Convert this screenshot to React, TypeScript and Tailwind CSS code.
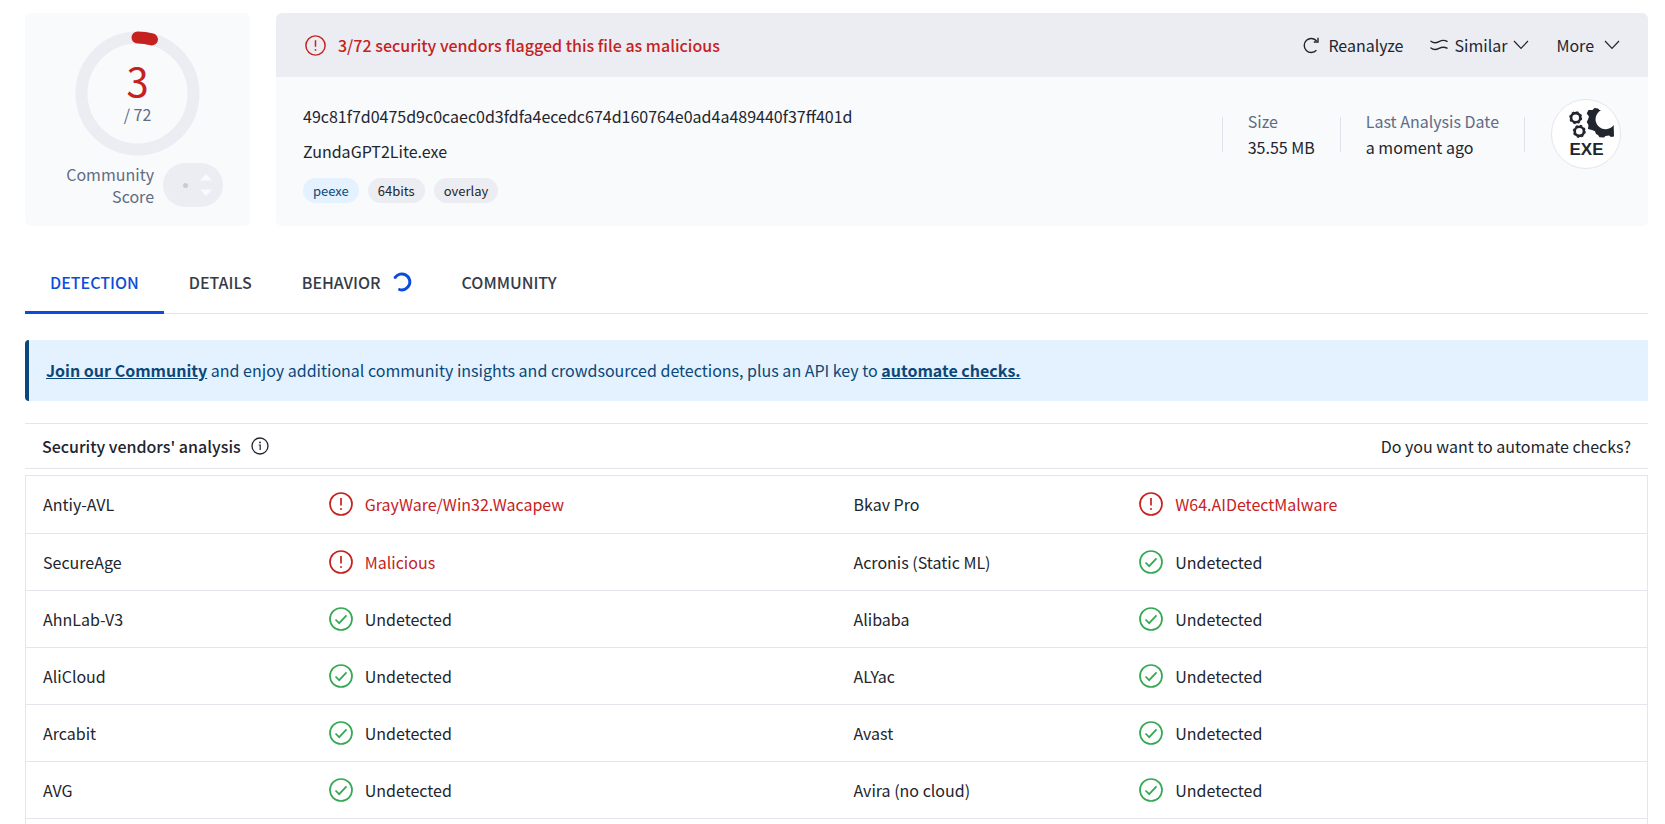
import React, { useState } from 'react';

type Verdict = { vendor: string; result: string; malicious?: boolean };

const FONT = "font-['Noto_Sans_CJK_JP','Noto_Sans',sans-serif]";

const ROWS: [Verdict, Verdict][] = [
    [{ vendor: 'Antiy-AVL', result: 'GrayWare/Win32.Wacapew', malicious: true }, { vendor: 'Bkav Pro', result: 'W64.AIDetectMalware', malicious: true }],
    [{ vendor: 'SecureAge', result: 'Malicious', malicious: true }, { vendor: 'Acronis (Static ML)', result: 'Undetected' }],
    [{ vendor: 'AhnLab-V3', result: 'Undetected' }, { vendor: 'Alibaba', result: 'Undetected' }],
    [{ vendor: 'AliCloud', result: 'Undetected' }, { vendor: 'ALYac', result: 'Undetected' }],
    [{ vendor: 'Arcabit', result: 'Undetected' }, { vendor: 'Avast', result: 'Undetected' }],
    [{ vendor: 'AVG', result: 'Undetected' }, { vendor: 'Avira (no cloud)', result: 'Undetected' }],
];

const TABS = ['Detection', 'Details', 'Behavior', 'Community'];

const AlertIcon = ({ className = '' }: { className?: string }) => (
    <svg viewBox="0 0 24 24" fill="none" stroke="currentColor" className={`shrink-0 ${className}`}>
        <circle cx="12" cy="12" r="11" strokeWidth="1.7" />
        <path d="M12 6v7.500" strokeWidth="1.7" />
        <circle cx="12" cy="17" r="1" fill="currentColor" stroke="none" />
    </svg>
);

const CheckIcon = ({ className = '' }: { className?: string }) => (
    <svg viewBox="0 0 24 24" fill="none" stroke="currentColor" strokeWidth="1.7" className={`shrink-0 ${className}`}>
        <circle cx="12" cy="12" r="11" />
        <path d="M6.500 12.500l3.700 3.700 7.300-7.800" />
    </svg>
);

const InfoIcon = () => (
    <svg viewBox="0 0 18 18" fill="none" stroke="currentColor" className="size-[18px] shrink-0">
        <circle cx="9" cy="9" r="8" strokeWidth="1.3" />
        <path d="M7.800 8h1.400v5" strokeWidth="1.2" />
        <circle cx="9" cy="5.400" r="0.9" fill="currentColor" stroke="none" />
    </svg>
);

const Chevron = () => (
    <svg viewBox="0 0 16 10" fill="none" stroke="currentColor" strokeWidth="1.2" className="h-[10px] w-4 shrink-0">
        <path d="M1 1l7 7.300L15 1" />
    </svg>
);

const Spinner = () => (
    <svg viewBox="0 0 20 20" fill="none" stroke="#0b4dda" strokeWidth="3" strokeLinecap="round" className="size-5 shrink-0">
        <path d="M3.200 5.400A8 8 0 1 1 7.600 17.600" />
    </svg>
);

// One small toothed wheel with an open hub
const Gear = ({ x, y }: { x: number; y: number }) => (
    <g transform={`translate(${x} ${y})`} fill="none" stroke="#21252e">
        <circle r="4.6" strokeWidth="2.6" />
        <circle r="5.9" strokeWidth="1.2" strokeDasharray="2.3 2.33" />
    </g>
);

const ExeBadge = () => (
    <div className="flex size-[70px] shrink-0 items-center justify-center rounded-full border border-[#e3e6ed] bg-white">
        <svg viewBox="0 0 70 70" className="size-[70px] shrink-0">
            <Gear x={24.7} y={18.7} />
            <Gear x={28.3} y={32.3} />
            <path
                fill="#21252e"
                d="M50 11.3A10 10 0 1 0 62.7 26L63 37.500 60 38 58 36.500 54.500 37 53 38.500 48.500 38.300 47 36 45 35 44 32.300 41 31 37 30 37.500 26 35.700 23 37 20.500 38 17.500 35.700 14.500 37.500 11 41.500 11 43.500 9 47 9.500 48.500 11z"
            />
            <text x="35.5" y="56" textAnchor="middle" fill="#21252e" fontSize="17" fontWeight="700" fontFamily="Liberation Sans, Arial, sans-serif">EXE</text>
        </svg>
    </div>
);

const ScoreCard = ({ score, total }: { score: number; total: number }) => {
    const radius = 56;
    const circumference = 2 * Math.PI * radius;
    const arc = (score / total) * circumference;

    return (
        <section className="flex h-[213px] w-[225px] shrink-0 flex-col items-center rounded-md bg-[#f9fafc] pt-[18px]">
            <div className="relative size-[125px] shrink-0">
                <svg viewBox="0 0 125 125" fill="none" strokeWidth="12" className="size-full">
                    <circle cx="62.5" cy="62.5" r={radius} stroke="#ecedf2" />
                    <circle
                        cx="62.5" cy="62.5" r={radius} stroke="#c5221f" strokeLinecap="round"
                        strokeDasharray={`${arc} ${circumference}`} transform="rotate(-90 62.5 62.5)"
                    />
                </svg>
                <div className="absolute inset-0 flex flex-col items-center justify-center gap-1">
                    <span className="text-[40px] leading-[36px] text-[#c5221f]">{score}</span>
                    <span className="leading-6 text-[#606c84]">/ {total}</span>
                </div>
            </div>
            <div className="mt-[7px] flex w-full items-center justify-end gap-[9px] pr-[27px]">
                <span className="w-24 text-right leading-[22px] text-[#606c84]">Community Score</span>
                <div className="flex h-11 w-[60px] items-center justify-between rounded-full bg-[#ecedf2] pr-[10px] pl-5">
                    <span className="size-[5px] rounded-full bg-[#c8cad8]" />
                    <svg viewBox="0 0 14 22" fill="#f9fafc" className="h-[22px] w-[14px]">
                        <path d="M1 6.500L7 0l6 6.500zM1 15.500h12L7 22z" />
                    </svg>
                </div>
            </div>
        </section>
    );
};

const SummaryCard = () => (
    <section className="flex min-w-0 flex-1 flex-col overflow-hidden rounded-md bg-[#f9fafc]">
        <header className="flex h-16 shrink-0 items-center justify-between bg-[#ecedf2] pr-7 pl-[29px]">
            <div className="flex items-center gap-3 font-medium text-[#c5221f]">
                <AlertIcon className="size-[21px]" />
                3/72 security vendors flagged this file as malicious
            </div>
            <div className="flex items-center gap-[27px]">
                <button className="flex items-center gap-2">
                    <svg viewBox="0 0 18 18" fill="none" stroke="currentColor" strokeWidth="1.4" className="size-[18px]">
                        <path d="M14.400 14.200A7 7 0 1 1 14.600 5" />
                        <path d="M16 1.800V6h-4.200" />
                    </svg>
                    Reanalyze
                </button>
                <button className="flex items-center gap-[6px]">
                    <svg viewBox="0 0 18 12" fill="none" stroke="currentColor" strokeWidth="1.4" strokeLinecap="round" className="h-3 w-[18px]">
                        <path d="M1 2.200C3.800 4.600 6 4.200 9 2.600S14 .600 17 2.400M1 9C3.800 11.400 6 11 9 9.400S14 7.400 17 9.200" />
                    </svg>
                    Similar
                    <Chevron />
                </button>
                <button className="flex items-center gap-[10px]">More<Chevron /></button>
            </div>
        </header>
        <div className="flex flex-1 items-start justify-between px-[27px]">
            <div className="min-w-0 pt-[27px]">
                <div className="leading-6">49c81f7d0475d9c0caec0d3fdfa4ecedc674d160764e0ad4a489440f37ff401d</div>
                <div className="mt-[11px] leading-6">ZundaGPT2Lite.exe</div>
                <div className="mt-[15px] flex gap-[9px] text-[13px]">
                    <a href="#peexe" className="rounded-full bg-[#e3f2fe] px-[10px] leading-[25px] text-[#0b4779]">peexe</a>
                    <a href="#64bits" className="rounded-full bg-[#ecedf2] px-[10px] leading-[25px]">64bits</a>
                    <a href="#overlay" className="rounded-full bg-[#ecedf2] px-[10px] leading-[25px]">overlay</a>
                </div>
            </div>
            <div className="flex shrink-0 items-center pt-[22px]">
                <dl className="flex items-center leading-[26px]">
                    <div className="h-[35px] w-px bg-[#dfe3eb]" />
                    <div className="px-[25px]">
                        <dt className="text-[#606c84]">Size</dt>
                        <dd>35.55 MB</dd>
                    </div>
                    <div className="h-[35px] w-px bg-[#dfe3eb]" />
                    <div className="px-[25px]">
                        <dt className="text-[#606c84]">Last Analysis Date</dt>
                        <dd>a moment ago</dd>
                    </div>
                    <div className="mr-[26px] h-[35px] w-px bg-[#dfe3eb]" />
                </dl>
                <ExeBadge />
            </div>
        </div>
    </section>
);

const VerdictCells = ({ vendor, result, malicious }: Verdict) => (
    <>
        <td className="pl-[17px]">{vendor}</td>
        <td className="pl-[11px]">
            <span className={`flex items-center gap-3 ${malicious ? 'text-[#c5221f]' : ''}`}>
                {malicious ? <AlertIcon className="size-6" /> : <CheckIcon className="size-6 text-[#34a853]" />}
                {result}
            </span>
        </td>
    </>
);

const App: React.FC = () => {
    const [active, setActive] = useState('Detection');

    return (
        <main className={`flex h-screen flex-col overflow-hidden bg-white pt-[13px] pr-[17px] pl-[25px] text-base text-[#21252e] ${FONT}`}>
            <div className="flex shrink-0 gap-[26px]">
                <ScoreCard score={3} total={72} />
                <SummaryCard />
            </div>

            <nav className="mt-[26px] flex h-[62px] shrink-0 border-b border-[#e3e6ed]">
                {TABS.map(tab => (
                    <button
                        key={tab}
                        onClick={() => setActive(tab)}
                        className={`-mb-px flex items-center gap-[11px] border-b-[3px] px-[25px] font-medium uppercase ${active === tab ? 'border-[#0b4dda] text-[#0b4dda]' : 'border-transparent text-[#363b47]'}`}
                    >
                        {tab}
                        {tab === 'Behavior' && <Spinner />}
                    </button>
                ))}
            </nav>

            <p className="mt-[26px] shrink-0 rounded-l-sm border-l-4 border-[#0b4779] bg-[#e3f2fe] pl-[17px] leading-[61px] text-[#0b4779]">
                <a href="#join" className="font-bold underline">Join our Community</a> and enjoy additional community insights and crowdsourced detections, plus an API key to <a href="#automate" className="font-bold underline">automate checks.</a>
            </p>

            <div className="mt-[22px] flex h-[46px] shrink-0 items-center justify-between border-y border-[#e3e6ed] px-[17px]">
                <h2 className="flex items-center gap-[10px] font-medium">Security vendors' analysis <InfoIcon /></h2>
                <a href="#automate">Do you want to automate checks?</a>
            </div>

            <div className="mt-[6px] flex-1 border border-b-0 border-[#e3e6ed]">
                <table className="w-full table-fixed border-collapse text-left">
                    <colgroup>
                        <col className="w-[18%]" />
                        <col className="w-[32%]" />
                        <col className="w-[18%]" />
                        <col className="w-[32%]" />
                    </colgroup>
                    <tbody>
                        {ROWS.map(([left, right]) => (
                            <tr key={left.vendor} className="h-[57px] border-b border-[#e3e6ed]">
                                <VerdictCells {...left} />
                                <VerdictCells {...right} />
                            </tr>
                        ))}
                    </tbody>
                </table>
            </div>
        </main>
    );
};

export default App;
